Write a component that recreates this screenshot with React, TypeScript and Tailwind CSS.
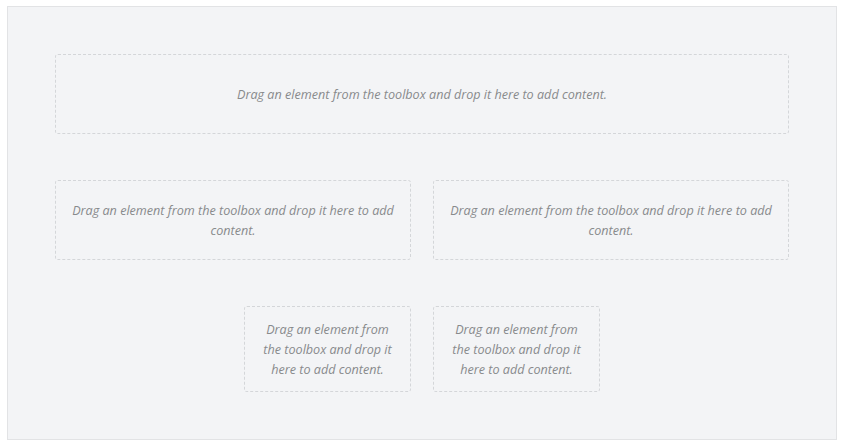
export default function App() {
  const text = "Drag an element from the toolbox and drop it here to add content.";
  const box =
    "flex min-h-[80px] items-center justify-center rounded-[3px] border border-dashed border-[#d4d6d9] px-4 pt-[13px] pb-[11px] text-center text-[12.6px] leading-5 italic text-[#888a8c]";
  return (
    <div className="bg-white p-[6px_6px_6px_7px]" style={{ fontFamily: '"Open Sans", sans-serif' }}>
      <div className="flex h-[434px] w-[830px] flex-col gap-[46px] border border-[#e2e3e5] bg-[#f3f4f6] px-[47px] pt-[47px]">
        <div className={box}>{text}</div>
        <div className="grid grid-cols-2 gap-[22px]">
          <div className={box}>{text}</div>
          <div className={box}>{text}</div>
        </div>
        <div className="grid grid-cols-4 gap-[22px]">
          <div className={`${box} col-start-2`}>{text}</div>
          <div className={box}>{text}</div>
        </div>
      </div>
    </div>
  );
}
